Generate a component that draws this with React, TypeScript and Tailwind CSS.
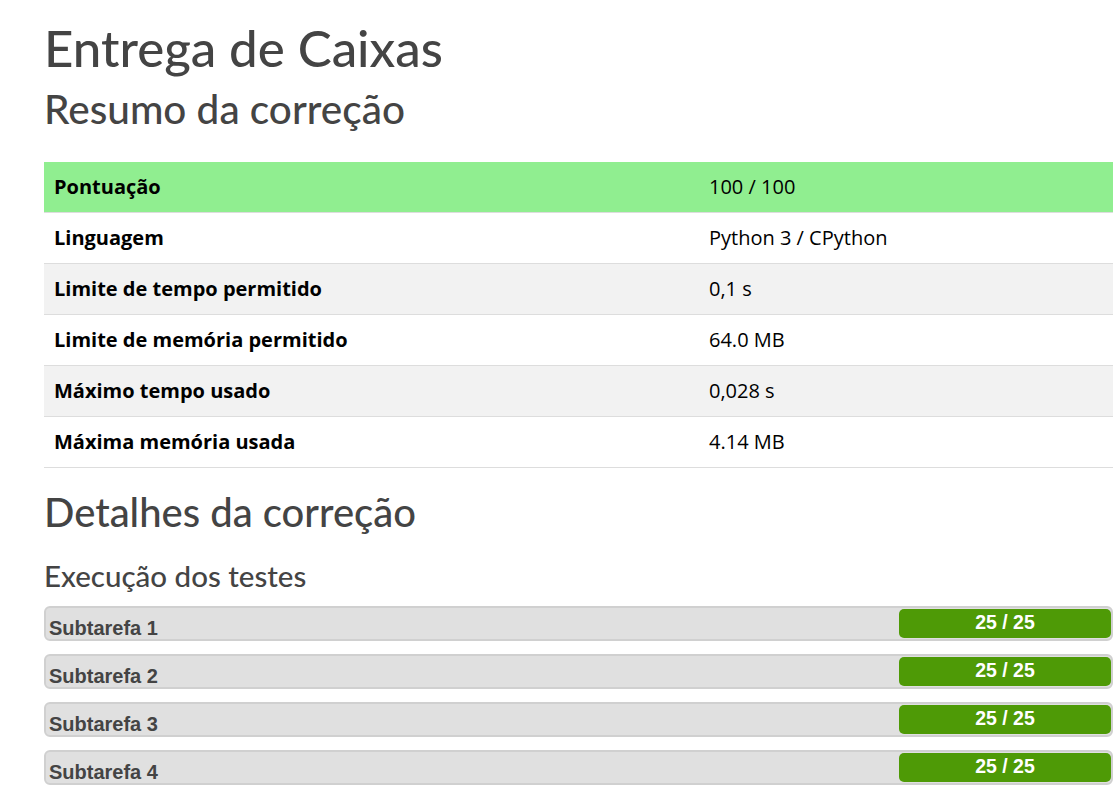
const rows = [
  { label: "Pontuação", value: "100 / 100", bg: "bg-[#90ee90]" },
  { label: "Linguagem", value: "Python 3 / CPython", bg: "bg-white" },
  { label: "Limite de tempo permitido", value: "0,1 s", bg: "bg-[#f2f2f2]" },
  { label: "Limite de memória permitido", value: "64.0 MB", bg: "bg-white" },
  { label: "Máximo tempo usado", value: "0,028 s", bg: "bg-[#f2f2f2]" },
  { label: "Máxima memória usada", value: "4.14 MB", bg: "bg-white" },
];

const subtasks = ["Subtarefa 1", "Subtarefa 2", "Subtarefa 3", "Subtarefa 4"];

const heading = "font-['Lato',sans-serif] text-[#444444]";

export default function App() {
  return (
    <div className="min-h-[790px] bg-white pl-[44px] pt-[18px]">
      <div className="w-[1069px]">
        <h1 className={`${heading} text-[51px] leading-[60px] font-medium`}>Entrega de Caixas</h1>
        <h2 className={`${heading} text-[40.5px] leading-[50px] font-medium mt-[6px]`}>Resumo da correção</h2>

        <table className="w-full mt-[28px] border-collapse font-['Open_Sans',sans-serif] text-[20px] text-black">
          <tbody>
            {rows.map((r, i) => (
              <tr key={r.label} className={`${r.bg} border-b border-[#dddddd] ${i === 0 ? "h-[50px]" : "h-[51px]"}`}>
                <td className="w-[655px] px-[10px] font-bold">{r.label}</td>
                <td className="px-[10px]">{r.value}</td>
              </tr>
            ))}
          </tbody>
        </table>

        <h2 className={`${heading} text-[40px] leading-[50px] font-medium mt-[19px]`}>Detalhes da correção</h2>
        <h3 className={`${heading} text-[29.5px] leading-[36px] font-medium mt-[21px]`}>Execução dos testes</h3>

        <div className="mt-[12px] flex flex-col gap-[13px]">
          {subtasks.map((s) => (
            <div
              key={s}
              className="flex h-[35px] items-stretch justify-between rounded-[6px] border-2 border-[#d0d0d0] bg-[#e0e0e0]"
            >
              <span className="self-end pl-[3px] font-['Liberation_Sans',Arial,sans-serif] text-[20px] font-bold leading-[21px] text-[#444444]">
                {s}
              </span>
              <span className="mt-px mb-px flex w-[212px] items-center justify-center rounded-[5px] bg-[#4e9a06] font-['Liberation_Sans',Arial,sans-serif] text-[19.5px] font-bold text-white">
                25 / 25
              </span>
            </div>
          ))}
        </div>
      </div>
    </div>
  );
}
